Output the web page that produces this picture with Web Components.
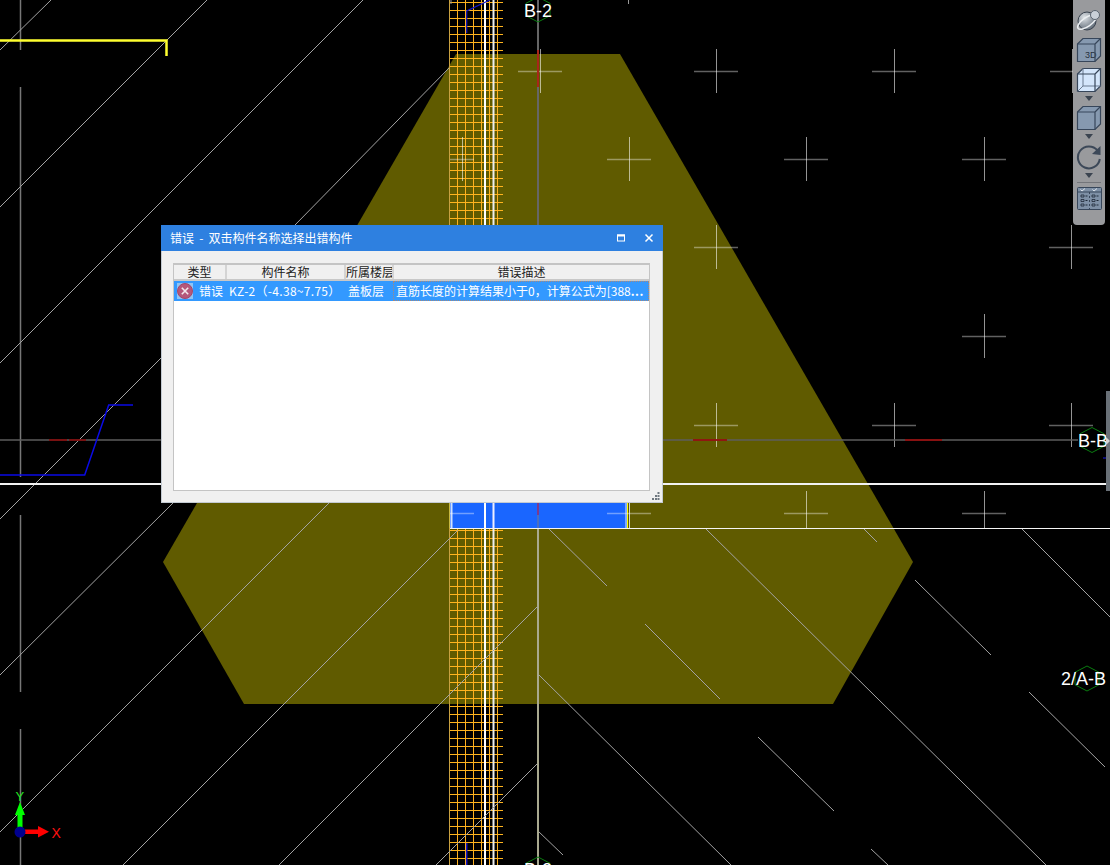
<!DOCTYPE html>
<html>
<head>
<meta charset="utf-8">
<style>
  html, body { margin: 0; height: 100%; background: #000; overflow: hidden; }
</style>
</head>
<body>
<cad-screen>
  <cad-viewport></cad-viewport>
  <view-toolbar></view-toolbar>
  <error-dialog heading="错误 - 双击构件名称选择出错构件">
    <error-row kind="错误" name="KZ-2（-4.38~7.75）" floor="盖板层" detail="直筋长度的计算结果小于0，计算公式为[388"></error-row>
  </error-dialog>
</cad-screen>

<script>
class CadScreen extends HTMLElement {
  constructor() {
    super();
    this.attachShadow({ mode: 'open' });
    this.shadowRoot.innerHTML = `
      <style>
        :host { display: block; position: relative; width: 1110px; height: 865px; background: #000; overflow: hidden; }
      </style>
      <slot></slot>
    `;
  }
}

class CadViewport extends HTMLElement {
  constructor() {
    super();
    this.attachShadow({ mode: 'open' });
  }

  connectedCallback() {
    this.render();
  }

  line(x1, y1, x2, y2, stroke, width) {
    return `<line x1="${x1}" y1="${y1}" x2="${x2}" y2="${y2}" stroke="${stroke}" stroke-width="${width}"/>`;
  }

  hatch() {
    let out = '';
    for (let y = 2.5; y < 865; y += 8) {
      out += this.line(449, y, 503, y, '#ffb41e', 1);
    }
    [457.5, 465.5, 473.5, 481.5, 489.5, 497.5].forEach((x) => {
      out += this.line(x, 0, x, 865, '#ffb01e', 1);
    });
    out += this.line(449.5, 0, 449.5, 865, '#c8a040', 1);
    out += this.line(485, 0, 485, 865, '#fff', 2);
    out += this.line(493.5, 0, 493.5, 865, '#eee', 2);
    return out;
  }

  diagonals() {
    const segs = [
      [0, 50, 51, 0], [0, 207, 207, 0], [0, 363, 363, 0], [295, 225, 449, 68],
      [0, 519, 161, 358], [0, 675, 173, 503], [0, 832, 329, 503],
      [123, 865, 458, 530], [279, 865, 538, 606], [436, 865, 538, 763],
      [549, 529, 607, 586], [706, 529, 1046, 865], [864, 529, 877, 542],
      [1022, 529, 1110, 617], [915, 580, 991, 655], [645, 624, 720, 699],
      [538, 674, 731, 865], [758, 737, 834, 811], [1029, 692, 1105, 767],
      [538, 831, 563, 855], [871, 849, 888, 865],
    ];
    return segs.map((s) => this.line(s[0], s[1], s[2], s[3], '#a3a3a3', 1)).join('');
  }

  crosses() {
    const points = [
      [540, 71], [716, 71], [894, 71], [1072, 71],
      [462, 159], [629, 159], [806, 159], [984, 159],
      [716, 247], [1071, 247],
      [984, 336],
      [716, 425], [894, 425], [1071, 425],
      [629, 513], [806, 513], [984, 513], [462, 513],
    ];
    return points.map(([x, y]) => {
      const left = x === 462 ? 450 : x - 22;
      const right = x === 462 ? 474 : x + 22;
      let out = this.line(left, y + 0.5, right, y + 0.5, 'rgba(255,255,255,.38)', 1.5);
      if (x !== 462 || y !== 513) {
        out += this.line(x + 0.5, y - 22, x + 0.5, Math.min(y + 22, 528), 'rgba(255,255,255,.58)', 1);
      }
      return out;
    }).join('');
  }

  hexagon(cx, cy) {
    const w = 12, h = 12.5;
    const pts = [[cx, cy - h], [cx + w, cy - h / 2], [cx + w, cy + h / 2], [cx, cy + h], [cx - w, cy + h / 2], [cx - w, cy - h / 2]];
    return `<polygon points="${pts.map((p) => p.join(',')).join(' ')}" fill="none" stroke="#0a7d10" stroke-width="1"/>`;
  }

  render() {
    this.shadowRoot.innerHTML = `
      <style>
        :host { display: block; position: absolute; inset: 0; }
        svg { display: block; }
        text { font-family: "Liberation Sans", sans-serif; fill: #fff; font-size: 18px; }
      </style>
      <svg width="1110" height="865" viewBox="0 0 1110 865">
        <polygon points="456,54 620,54 913,562 833,704 244,704 163,562" fill="#605b00"/>
        ${this.hatch()}
        <rect x="450" y="503" width="177" height="25" fill="#1a66ff"/>
        ${this.line(451.5, 503, 451.5, 528, '#cfe0ff', 2)}
        ${this.line(449.5, 503, 449.5, 528, '#c8b840', 1)}
        ${this.line(485, 503, 485, 528, '#fff', 2)}
        ${this.line(493.5, 503, 493.5, 528, '#eef', 2)}
        ${this.line(626, 503, 626, 528, '#dfe8ff', 1)}
        ${this.line(627.5, 503, 627.5, 528, '#ffff00', 1)}
        ${this.line(629.5, 503, 629.5, 528, '#999', 1)}
        ${this.line(20.5, 0, 20.5, 50, '#777', 1.5)}
        ${this.line(20.5, 87, 20.5, 477, '#777', 1.5)}
        ${this.line(20.5, 515, 20.5, 692, '#777', 1.5)}
        ${this.line(20.5, 729, 20.5, 865, '#777', 1.5)}
        ${this.diagonals()}
        ${this.crosses()}
        ${this.line(451, 0, 451, 4, '#999', 1)}
        ${this.line(628.5, 0, 628.5, 4, '#999', 1)}
        ${this.line(0, 440, 1078, 440, '#5c5c5c', 1.5)}
        ${this.line(538, 0, 538, 528, '#666', 2)}
        ${this.line(538, 50, 538, 87, '#a8261a', 2)}
        ${this.line(538, 503, 538, 515, '#7d3a8c', 2)}
        ${this.line(538, 515, 538, 528, '#4a70c0', 2)}
        ${this.line(538, 528, 538, 865, '#a9a98f', 2)}
        ${this.line(49, 440, 67, 440, '#8b0000', 1.5)}
        ${this.line(69, 440, 86, 440, '#8b0000', 1.5)}
        ${this.line(693, 440, 727, 440, '#a00000', 1.5)}
        ${this.line(905, 440, 942, 440, '#a00000', 1.5)}
        ${this.line(0, 484, 1106, 484, '#f2f2f2', 2)}
        ${this.line(450, 528.5, 1110, 528.5, '#f5f5f5', 1)}
        <polyline points="0,40.5 166.5,40.5 166.5,56" fill="none" stroke="#ffff30" stroke-width="2.5"/>
        <polyline points="0,475 84.7,475 108.7,405 133,405" fill="none" stroke="#0a0ae6" stroke-width="1.5"/>
        <polyline points="466.7,33 466.7,11 490,0" fill="none" stroke="#1414c8" stroke-width="1.2"/>
        ${this.line(466.7, 843, 466.7, 865, '#1414c8', 1.5)}
        ${this.hexagon(538, 9.5)}
        <text x="524" y="17">B-2</text>
        ${this.hexagon(1092, 440)}
        <text x="1078" y="446.5">B-B</text>
        ${this.hexagon(1087, 678.5)}
        <text x="1061" y="684.5">2/A-B</text>
        ${this.hexagon(538, 869.5)}
        <text x="524" y="876">B-2</text>
        <rect x="1106" y="391" width="4" height="100" fill="#697077"/>
        <polygon points="1106,437 1110,441 1106,445" fill="#d5d5d5"/>
        ${this.line(1103, 458, 1106, 458, '#1a1ae6', 1)}
        <!-- ucs marker -->
        <rect x="17.5" y="813" width="5" height="16" fill="#00ff00"/>
        <polygon points="20,802 15,815 25,815" fill="#00ff00"/>
        <text x="15.5" y="800.5" style="fill:#22e022;font-size:13px">Y</text>
        <rect x="25" y="829.5" width="14" height="4.5" fill="#ff0000"/>
        <polygon points="38,826 49,831.7 38,837.5" fill="#ff0000"/>
        <circle cx="20" cy="832" r="5.5" fill="#00008f"/>
        <text x="51.5" y="838" style="fill:#ff1010;font-size:14px">X</text>
      </svg>
    `;
  }
}

class ViewToolbar extends HTMLElement {
  constructor() {
    super();
    this.attachShadow({ mode: 'open' });
    const cube = (fill, extra) => `
      <svg width="26" height="26" viewBox="0 0 26 26">
        <polygon points="1.5,7 7,1.5 24.5,1.5 24.5,19 19,24.5 1.5,24.5" fill="${fill}" stroke="#37465a" stroke-width="1.2"/>
        ${extra}
        <path d="M1.5 7H19V24.5M19 7L24.5 1.5" fill="none" stroke="#37465a" stroke-width="1.2"/>
      </svg>`;
    const caret = '<svg class="caret" width="8" height="5" viewBox="0 0 8 5"><polygon points="0,0 8,0 4,5" fill="#3b4450"/></svg>';
    this.shadowRoot.innerHTML = `
      <style>
        :host {
          display: flex; flex-direction: column; align-items: center;
          position: absolute; left: 1073px; top: 0; width: 32px; height: 225px;
          background: #999a9d; border-radius: 0 0 4px 4px; padding-top: 8px; box-sizing: border-box;
        }
        svg { display: block; flex: none; }
        .caret { margin: 3px 0 4px; }
        .rule { width: 24px; height: 1px; background: #73757a; margin: 0 0 4px; }
        text { font-family: "Liberation Sans", sans-serif; font-size: 9px; fill: #26303c; }
      </style>
      <svg width="26" height="25" viewBox="0 0 26 25" style="margin-bottom:4px">
        <defs>
          <radialGradient id="ball" cx="35%" cy="30%" r="75%">
            <stop offset="0" stop-color="#dfe3e7"/>
            <stop offset="1" stop-color="#5f6a76"/>
          </radialGradient>
        </defs>
        <circle cx="11" cy="13" r="9" fill="url(#ball)" stroke="#39424e"/>
        <ellipse cx="11" cy="14" rx="11" ry="4.5" transform="rotate(-35 11 14)" fill="none" stroke="#eceff2" stroke-width="1.5"/>
        <circle cx="19" cy="7" r="4.5" fill="#c9d0d8" stroke="#5a6470"/>
      </svg>
      ${cube('#8699b0', '<text x="9" y="21">3D</text>')}
      <svg width="26" height="26" viewBox="0 0 26 26" style="margin-top:4px">
        <polygon points="1.5,7 7,1.5 24.5,1.5 24.5,19 19,24.5 1.5,24.5" fill="#d4e6fb" stroke="#37465a" stroke-width="1.2"/>
        <path d="M7 1.5V19H24.5M7 19L1.5 24.5" fill="none" stroke="#6b7b90"/>
        <path d="M1.5 7H19V24.5M19 7L24.5 1.5" fill="none" stroke="#37465a" stroke-width="1.2"/>
      </svg>
      ${caret}
      ${cube('#8699b0', '')}
      ${caret}
      <svg width="26" height="27" viewBox="0 0 26 27">
        <path d="M21.5 7.5A11 11 0 1 0 23.8 16" fill="none" stroke="#3c4858" stroke-width="2"/>
        <polygon points="24.5,3 24.5,12 16,11" fill="#3c4858"/>
      </svg>
      ${caret}
      <div class="rule"></div>
      <svg width="25" height="23" viewBox="0 0 25 23">
        <rect x="0.5" y="0.5" width="24" height="22" rx="1" fill="#7e90a6" stroke="#37465a"/>
        <line x1="1" y1="5" x2="24" y2="5" stroke="#37465a"/>
        <line x1="12.5" y1="5" x2="12.5" y2="22" stroke="#37465a" stroke-dasharray="2 2"/>
        <path d="M3.5 2.5L5 4L8 1.5M15.5 2.5L17 4L20 1.5" fill="none" stroke="#e8eef5" stroke-width=".9"/>
        <path d="M4 8h3v2h-3zM4 12.5h3v2h-3zM4 17h3v2h-3zM15 8h3v2h-3zM15 12.5h3v2h-3zM15 17h3v2h-3z" fill="none" stroke="#1f2a38" stroke-width=".8"/>
        <path d="M8.5 9h2M8.5 13.5h2M8.5 18h2M19.5 9h2M19.5 13.5h2M19.5 18h2" stroke="#1f2a38"/>
      </svg>
    `;
  }
}

class ErrorDialog extends HTMLElement {
  constructor() {
    super();
    this.attachShadow({ mode: 'open' });
  }

  connectedCallback() {
    const heading = this.getAttribute('heading') || '';
    this.shadowRoot.innerHTML = `
      <style>
        :host {
          display: flex; flex-direction: column; box-sizing: border-box;
          position: absolute; left: 161px; top: 225px; width: 502px; height: 278px;
          background: #f0f0f0; border: 1px solid #c3cad2; border-top: 0;
          font: 12px "Noto Sans CJK SC", "Liberation Sans", sans-serif; color: #222;
        }
        .title {
          display: flex; align-items: center; flex: none; height: 26px; margin: 0 -1px;
          background: #2e80e0; color: #fff; padding: 0 8px 0 9px; line-height: 26px;
          word-spacing: 2.5px;
        }
        .title span { flex: 1; }
        .title svg { display: block; margin-left: 14px; }
        .list {
          display: flex; flex-direction: column; flex: 1; min-height: 0;
          margin: 12px 12px 11px 11px; background: #fff;
          border: 1px solid #c4c4c4; border-top-width: 2px;
        }
        .head {
          display: grid; grid-template-columns: 51px 119px 48px 1fr; flex: none; height: 16px; box-sizing: border-box;
          background: #f0f0f0; border-bottom: 2px solid #c8c8c8; text-align: center; line-height: 14px;
        }
        .head div { border-left: 2px solid #d4d4d4; white-space: nowrap; }
        .head div:first-child { border-left: 0; }
        .grip { position: absolute; right: 2px; bottom: 2px; display: block; }
      </style>
      <div class="title">
        <span>${heading}</span>
        <svg width="10" height="10" viewBox="0 0 10 10"><rect x="1.5" y="2" width="7" height="6" fill="none" stroke="#fff"/><rect x="1" y="1.5" width="8" height="2" fill="#fff"/></svg>
        <svg width="10" height="10" style="margin-left:18px;margin-right:1px" viewBox="0 0 10 10"><path d="M1.5 1.5L8.5 8.5M8.5 1.5L1.5 8.5" stroke="#fff" stroke-width="1.5"/></svg>
      </div>
      <div class="list">
        <div class="head"><div>类型</div><div>构件名称</div><div>所属楼层</div><div>错误描述</div></div>
        <slot></slot>
      </div>
      <svg class="grip" width="8" height="8" viewBox="0 0 8 8" fill="#6f7880">
        <rect x="5.5" y="0" width="2" height="2"/>
        <rect x="3" y="3" width="2" height="2"/><rect x="5.5" y="3" width="2" height="2"/>
        <rect x="0" y="6" width="2" height="2"/><rect x="3" y="6" width="2" height="2"/><rect x="5.5" y="6" width="2" height="2"/>
      </svg>
    `;
  }
}

class ErrorRow extends HTMLElement {
  constructor() {
    super();
    this.attachShadow({ mode: 'open' });
  }

  connectedCallback() {
    const attr = (n) => this.getAttribute(n) || '';
    this.shadowRoot.innerHTML = `
      <style>
        :host {
          display: grid; grid-template-columns: 52px 119px 48px 1fr; height: 20px;
          background: #3399ff; color: #fff; line-height: 20px; white-space: nowrap;
          font: 12px/20px "Noto Sans CJK SC", "Liberation Sans", sans-serif;
        }
        .kind { display: flex; align-items: center; gap: 6px; padding-left: 3px; }
        .kind svg { flex: none; display: block; }
        .name { padding-left: 3px; letter-spacing: .3px; }
        .floor { padding-left: 3px; }
        .detail { padding-left: 3px; outline: 1px dotted rgba(214,130,70,.7); outline-offset: -1px; overflow: hidden; }
        b { font-weight: 700; letter-spacing: .5px; }
      </style>
      <div class="kind">
        <svg width="16" height="16" viewBox="0 0 16 16">
          <rect width="16" height="16" fill="#8fc4f5"/>
          <circle cx="8" cy="8" r="7.5" fill="#b5587a" stroke="#a3466a"/>
          <path d="M4.8 4.8L11.2 11.2M11.2 4.8L4.8 11.2" stroke="#f4e8ec" stroke-width="1.6"/>
        </svg>
        <span>${attr('kind')}</span>
      </div>
      <div class="name">${attr('name')}</div>
      <div class="floor">${attr('floor')}</div>
      <div class="detail">${attr('detail')}<b>...</b></div>
    `;
  }
}

customElements.define('cad-screen', CadScreen);
customElements.define('cad-viewport', CadViewport);
customElements.define('view-toolbar', ViewToolbar);
customElements.define('error-dialog', ErrorDialog);
customElements.define('error-row', ErrorRow);
</script>
</body>
</html>
